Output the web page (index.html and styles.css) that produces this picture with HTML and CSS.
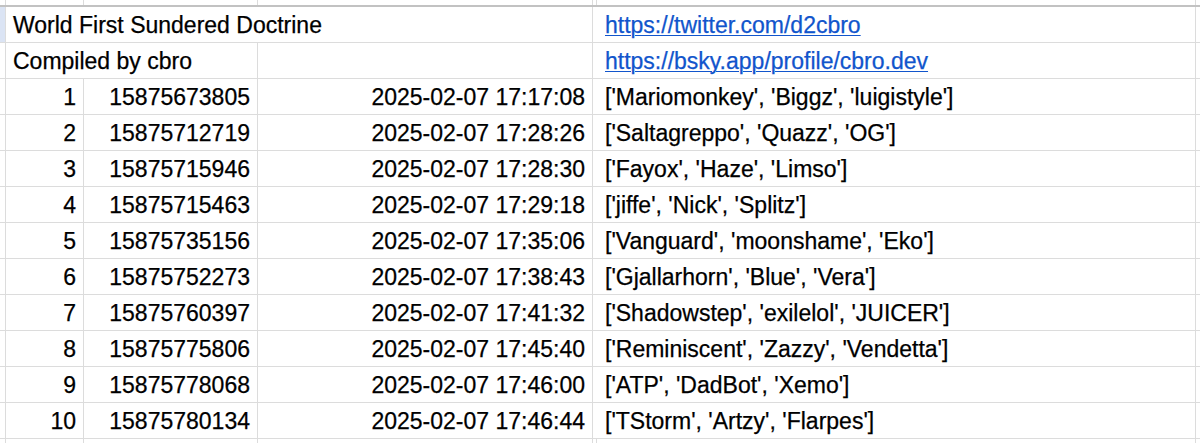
FILE: index.html
```html
<!DOCTYPE html>
<html lang="en">
<head>
<meta charset="utf-8">
<title>World First Sundered Doctrine</title>
<link rel="stylesheet" href="styles.css">
</head>
<body>
<div class="sheet">
  <div class="row top">
    <div class="c hd"></div><div class="c"></div><div class="c"></div><div class="c"></div><div class="c"></div><div class="c"></div><div class="c"></div>
  </div>
  <div class="row">
    <div class="c hd sel"></div>
    <div class="c l span3">World First Sundered Doctrine</div>
    <div class="c"></div>
    <div class="c l"><a href="#">https://twitter.com/d2cbro</a></div>
    <div class="c"></div>
  </div>
  <div class="row">
    <div class="c hd"></div>
    <div class="c l span2">Compiled by cbro</div>
    <div class="c"></div>
    <div class="c"></div>
    <div class="c l"><a href="#">https://bsky.app/profile/cbro.dev</a></div>
    <div class="c"></div>
  </div>
  <div class="row"><div class="c hd"></div><div class="c r">1</div><div class="c r">15875673805</div><div class="c r">2025-02-07 17:17:08</div><div class="c"></div><div class="c l">['Mariomonkey', 'Biggz', 'luigistyle']</div><div class="c"></div></div>
  <div class="row"><div class="c hd"></div><div class="c r">2</div><div class="c r">15875712719</div><div class="c r">2025-02-07 17:28:26</div><div class="c"></div><div class="c l">['Saltagreppo', 'Quazz', 'OG']</div><div class="c"></div></div>
  <div class="row"><div class="c hd"></div><div class="c r">3</div><div class="c r">15875715946</div><div class="c r">2025-02-07 17:28:30</div><div class="c"></div><div class="c l">['Fayox', 'Haze', 'Limso']</div><div class="c"></div></div>
  <div class="row"><div class="c hd"></div><div class="c r">4</div><div class="c r">15875715463</div><div class="c r">2025-02-07 17:29:18</div><div class="c"></div><div class="c l">['jiffe', 'Nick', 'Splitz']</div><div class="c"></div></div>
  <div class="row"><div class="c hd"></div><div class="c r">5</div><div class="c r">15875735156</div><div class="c r">2025-02-07 17:35:06</div><div class="c"></div><div class="c l">['Vanguard', 'moonshame', 'Eko']</div><div class="c"></div></div>
  <div class="row"><div class="c hd"></div><div class="c r">6</div><div class="c r">15875752273</div><div class="c r">2025-02-07 17:38:43</div><div class="c"></div><div class="c l">['Gjallarhorn', 'Blue', 'Vera']</div><div class="c"></div></div>
  <div class="row"><div class="c hd"></div><div class="c r">7</div><div class="c r">15875760397</div><div class="c r">2025-02-07 17:41:32</div><div class="c"></div><div class="c l">['Shadowstep', 'exilelol', 'JUICER']</div><div class="c"></div></div>
  <div class="row"><div class="c hd"></div><div class="c r">8</div><div class="c r">15875775806</div><div class="c r">2025-02-07 17:45:40</div><div class="c"></div><div class="c l">['Reminiscent', 'Zazzy', 'Vendetta']</div><div class="c"></div></div>
  <div class="row"><div class="c hd"></div><div class="c r">9</div><div class="c r">15875778068</div><div class="c r">2025-02-07 17:46:00</div><div class="c"></div><div class="c l">['ATP', 'DadBot', 'Xemo']</div><div class="c"></div></div>
  <div class="row"><div class="c hd"></div><div class="c r">10</div><div class="c r">15875780134</div><div class="c r">2025-02-07 17:46:44</div><div class="c"></div><div class="c l">['TStorm', 'Artzy', 'Flarpes']</div><div class="c"></div></div>
  <div class="row bottom">
    <div class="c hd"></div><div class="c"></div><div class="c"></div><div class="c"></div><div class="c"></div><div class="c"></div><div class="c"></div>
  </div>
</div>
</body>
</html>
```

FILE: styles.css
```css
html, body {
  margin: 0;
  padding: 0;
  background: #ffffff;
  overflow: hidden;
}

.sheet {
  width: 1200px;
  height: 443px;
  font-family: "Liberation Sans", Arial, sans-serif;
  font-size: 23px;
  color: #000000;
  -webkit-text-stroke: 0.25px currentColor;
}

.row {
  display: grid;
  grid-template-columns: 5px 77px 173px 334px 3px 598px 4px;
  column-gap: 1px;
  height: 35px;
  background: #dcdcdc;
  border-bottom: 1px solid #dcdcdc;
}

.row.top {
  height: 5px;
  border-bottom: 2px solid #c2c2c2;
}

.row.bottom {
  height: 4px;
  border-bottom: 0;
}

.c {
  background: #ffffff;
  display: flex;
  align-items: flex-end;
  padding: 0 7px 4px;
  line-height: 26px;
  white-space: nowrap;
  overflow: visible;
  min-width: 0;
}

.row.top .c,
.row.bottom .c,
.c.hd {
  padding: 0;
}

.c.sel {
  background: #dbe4f4;
}

.c.r {
  justify-content: flex-end;
}

.c.l {
  justify-content: flex-start;
  padding-left: 7px;
}

.row .c:nth-child(6).l,
.row .c.l:has(a) {
  padding-left: 8px;
}

.span3 {
  grid-column: span 3;
}

.span2 {
  grid-column: span 2;
}

a {
  color: #1155cc;
  text-decoration: underline;
  text-decoration-thickness: 1px;
  text-underline-offset: 2px;
}
```
